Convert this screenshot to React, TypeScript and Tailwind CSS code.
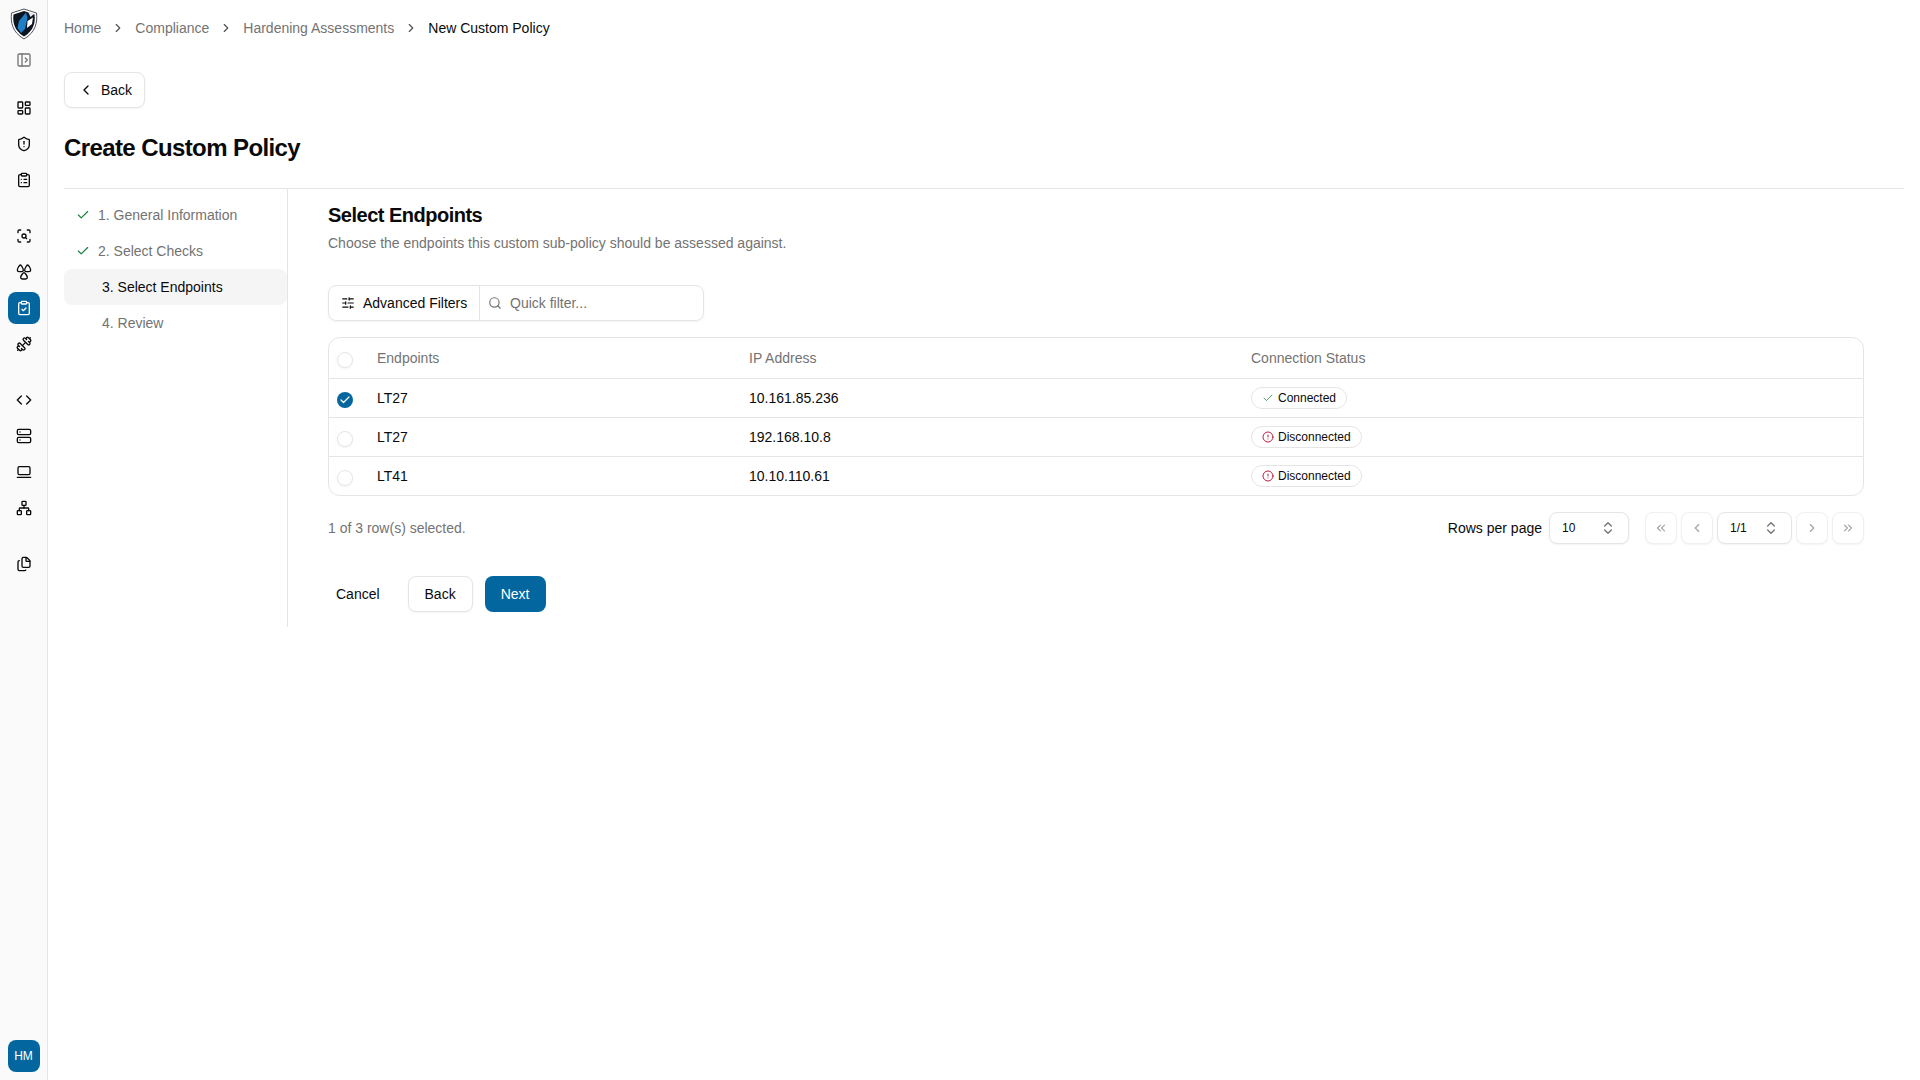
import React from 'react';
import {
  Check,
  ChevronLeft,
  ChevronRight,
  ChevronsLeft,
  ChevronsRight,
  ChevronsUpDown,
  CircleAlert,
  ClipboardCheck,
  ClipboardList,
  Code,
  Dumbbell,
  Files,
  LaptopMinimal,
  LayoutDashboard,
  Network,
  PanelLeftOpen,
  ScanSearch,
  Search,
  Server,
  ShieldAlert,
  SlidersHorizontal,
} from 'lucide-react';

const Logo = () => (
  <svg width="28" height="32" viewBox="0 0 28 32" className="mt-2">
    <path d="M14 1 L26.500 5 C27.500 14 26 24 14 31 C2 24 0.500 14 1.500 5 Z" fill="#ffffff" stroke="#52525b" strokeWidth="1" />
    <path d="M14 3 L24.500 6.500 C25.500 14 24 22.500 14 28.500 C4 22.500 2.500 14 3.500 6.500 Z" fill="#0b1420" />
    <path d="M16 4.500 L9 13 L7.500 20 L11 25 L15 21 L17.500 10 Z" fill="#1d7fc4" />
    <path d="M23 9.500 L17.500 13 L17 20 L22 16 Z" fill="#ffffff" />
    <path d="M18 3.500 L24 6 L20.500 9 Z" fill="#e5e7eb" />
  </svg>
);

const Triad = () => (
  <svg width="16" height="16" viewBox="0 0 24 24" fill="none" stroke="#0a0a0a" strokeWidth="2" strokeLinejoin="round">
    <path d="M6.500 1.500 C8 1.500 11 7 11 9 C11 10.500 10 11.500 8.500 11.500 H4.500 C3 11.500 2 10.500 2 9 C2 7 5 1.500 6.500 1.500 Z" />
    <path d="M17.500 1.500 C19 1.500 22 7 22 9 C22 10.500 21 11.500 19.500 11.500 H15.500 C14 11.500 13 10.500 13 9 C13 7 16 1.500 17.500 1.500 Z" />
    <path d="M12 13 C13.500 13 17 18 17 20 C17 21.500 16 22.500 14.500 22.500 H9.500 C8 22.500 7 21.500 7 20 C7 18 10.500 13 12 13 Z" />
  </svg>
);

const NavItem = ({ children, active }: { children: React.ReactNode; active?: boolean }) => (
  <div
    className={
      active
        ? 'flex h-8 w-8 items-center justify-center rounded-lg bg-[#04669f] text-white my-0.5'
        : 'flex h-9 w-8 items-center justify-center text-[#0a0a0a]'
    }
  >
    {children}
  </div>
);

const Sidebar = () => (
  <aside className="flex h-screen w-12 shrink-0 flex-col items-center border-r border-[#e5e5e5] bg-[#fafafa] pb-2">
    <div className="flex h-[42px] items-start">
      <Logo />
    </div>
    <div className="flex h-9 items-center text-[#737373]">
      <PanelLeftOpen size={16} />
    </div>
    <div className="mt-[12px] flex flex-col">
      <NavItem><LayoutDashboard size={16} /></NavItem>
      <NavItem><ShieldAlert size={16} /></NavItem>
      <NavItem><ClipboardList size={16} /></NavItem>
    </div>
    <div className="mt-5 flex flex-col">
      <NavItem><ScanSearch size={16} /></NavItem>
      <NavItem><Triad /></NavItem>
      <NavItem active><ClipboardCheck size={16} /></NavItem>
      <NavItem><Dumbbell size={16} /></NavItem>
    </div>
    <div className="mt-5 flex flex-col">
      <NavItem><Code size={16} /></NavItem>
      <NavItem><Server size={16} /></NavItem>
      <NavItem><LaptopMinimal size={16} /></NavItem>
      <NavItem><Network size={16} /></NavItem>
    </div>
    <div className="mt-5 flex flex-col">
      <NavItem><Files size={16} /></NavItem>
    </div>
    <div className="mt-auto flex h-8 w-8 items-center justify-center rounded-lg bg-[#04669f] text-xs text-white">
      HM
    </div>
  </aside>
);

const Crumb = ({ label, last }: { label: string; last?: boolean }) => (
  <>
    <span className={last ? 'text-[#0a0a0a]' : 'text-[#737373]'}>{label}</span>
    {!last && <ChevronRight size={14} className="text-[#525252]" />}
  </>
);

const steps = [
  { label: '1. General Information', done: true },
  { label: '2. Select Checks', done: true },
  { label: '3. Select Endpoints', current: true },
  { label: '4. Review' },
];

const Stepper = () => (
  <div className="w-[224px] shrink-0 border-r border-[#e5e5e5] pt-2">
    {steps.map((s) => (
      <div
        key={s.label}
        className={
          s.current
            ? 'flex h-9 items-center rounded-lg bg-[#f5f5f5] pl-[38px] text-sm text-[#0a0a0a]'
            : s.done
              ? 'flex h-9 items-center gap-2 pl-3 text-sm text-[#737373]'
              : 'flex h-9 items-center pl-[38px] text-sm text-[#737373]'
        }
      >
        {s.done && <Check size={14} className="text-[#15803d]" />}
        {s.label}
      </div>
    ))}
  </div>
);

const Box = ({ checked }: { checked?: boolean }) =>
  checked ? (
    <div className="mt-1 flex h-4 w-4 items-center justify-center rounded-full bg-[#04669f] text-white">
      <Check size={12} strokeWidth={2.5} />
    </div>
  ) : (
    <div className="mt-1 h-4 w-4 rounded-full border border-[#e5e5e5] bg-white shadow-xs" />
  );

const rows = [
  { name: 'LT27', ip: '10.161.85.236', ok: true, checked: true },
  { name: 'LT27', ip: '192.168.10.8', ok: false },
  { name: 'LT41', ip: '10.10.110.61', ok: false },
];

const Status = ({ ok }: { ok: boolean }) => (
  <span className="inline-flex h-[22px] items-center gap-1 rounded-full border border-[#e5e5e5] px-2.5 text-xs text-[#0a0a0a]">
    {ok ? (
      <Check size={12} strokeWidth={1.5} className="text-[#15803d]" />
    ) : (
      <CircleAlert size={12} className="text-[#b91c3c]" />
    )}
    {ok ? 'Connected' : 'Disconnected'}
  </span>
);

const PageBtn = ({ children }: { children: React.ReactNode }) => (
  <button className="flex h-8 w-8 items-center justify-center rounded-lg border border-[#f0f0f0] bg-white text-[#a3a3a3] shadow-xs">
    {children}
  </button>
);

const SelectBox = ({ value, className }: { value: string; className: string }) => (
  <div className={`flex h-8 items-center justify-between rounded-lg border border-[#e5e5e5] bg-white pl-3 pr-3 text-xs text-[#0a0a0a] shadow-xs ${className}`}>
    {value}
    <ChevronsUpDown size={16} className="text-[#737373]" />
  </div>
);

const EndpointsTable = () => (
  <div className="mt-4 overflow-hidden rounded-xl border border-[#e5e5e5]">
    <table className="w-full table-fixed text-sm">
      <colgroup>
        <col className="w-[48px]" />
        <col className="w-[372px]" />
        <col className="w-[502px]" />
        <col />
      </colgroup>
      <thead>
        <tr className="h-[40px] border-b border-[#e5e5e5] text-left text-[#737373]">
          <th className="pl-2 font-normal"><Box /></th>
          <th className="font-normal">Endpoints</th>
          <th className="font-normal">IP Address</th>
          <th className="font-normal">Connection Status</th>
        </tr>
      </thead>
      <tbody>
        {rows.map((r, i) => (
          <tr key={r.ip} className={i < rows.length - 1 ? 'h-[39px] border-b border-[#e5e5e5]' : 'h-[39px]'}>
            <td className="pl-2"><Box checked={r.checked} /></td>
            <td className="text-[#0a0a0a]">{r.name}</td>
            <td className="text-[#0a0a0a]">{r.ip}</td>
            <td><Status ok={r.ok} /></td>
          </tr>
        ))}
      </tbody>
    </table>
  </div>
);

export default function App() {
  return (
    <div className="flex h-screen bg-white font-['Liberation_Sans',Arial,sans-serif] text-[#0a0a0a]">
      <Sidebar />
      <main className="min-w-0 flex-1 pl-4 pr-4">
        <nav className="flex h-14 items-center gap-2.5 text-sm">
          <Crumb label="Home" />
          <Crumb label="Compliance" />
          <Crumb label="Hardening Assessments" />
          <Crumb label="New Custom Policy" last />
        </nav>
        <button className="mt-4 flex h-9 w-[81px] items-center gap-[7px] rounded-lg border border-[#e5e5e5] bg-white pl-[13px] text-sm shadow-xs">
          <ChevronLeft size={16} />
          Back
        </button>
        <h1 className="mt-6 text-2xl font-bold leading-8 tracking-tight">Create Custom Policy</h1>
        <div className="mt-6 flex border-t border-[#e5e5e5]">
          <Stepper />
          <section className="min-w-0 flex-1 pl-10 pr-10 pb-[15px] pt-3">
            <h2 className="text-xl font-bold leading-7 tracking-tight">Select Endpoints</h2>
            <p className="mt-1 text-sm text-[#737373]">Choose the endpoints this custom sub-policy should be assessed against.</p>
            <div className="mt-8 flex h-9 w-[376px] rounded-lg border border-[#e5e5e5] text-sm shadow-xs">
              <div className="flex w-[151px] items-center gap-2 border-r border-[#e5e5e5] pl-3">
                <SlidersHorizontal size={14} />
                Advanced Filters
              </div>
              <div className="flex flex-1 items-center gap-2 pl-2 text-[#737373]">
                <Search size={14} />
                Quick filter...
              </div>
            </div>
            <EndpointsTable />
            <div className="mt-4 flex items-center justify-between text-sm">
              <span className="text-[#737373]">1 of 3 row(s) selected.</span>
              <div className="flex items-center">
                <span className="mr-[7px]">Rows per page</span>
                <SelectBox value="10" className="w-20" />
                <div className="ml-4 flex items-center gap-1">
                  <PageBtn><ChevronsLeft size={14} /></PageBtn>
                  <PageBtn><ChevronLeft size={14} /></PageBtn>
                  <SelectBox value="1/1" className="w-[75px]" />
                  <PageBtn><ChevronRight size={14} /></PageBtn>
                  <PageBtn><ChevronsRight size={14} /></PageBtn>
                </div>
              </div>
            </div>
            <div className="mt-8 flex items-center text-sm">
              <button className="h-9 px-2">Cancel</button>
              <button className="ml-5 h-9 w-[65px] rounded-lg border border-[#e5e5e5] bg-white shadow-xs">Back</button>
              <button className="ml-3 h-9 w-[61px] rounded-lg bg-[#04669f] text-white">Next</button>
            </div>
          </section>
        </div>
      </main>
    </div>
  );
}
